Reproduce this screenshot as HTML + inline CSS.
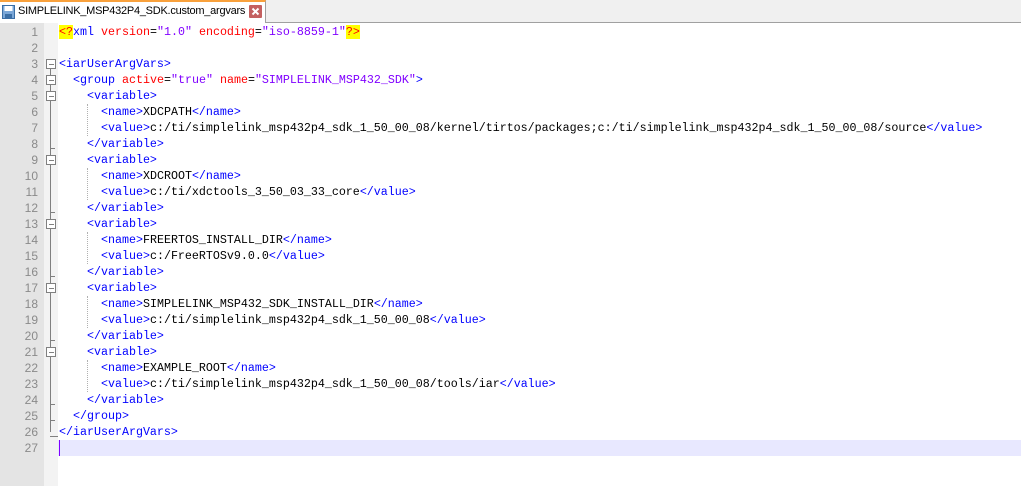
<!DOCTYPE html>
<html><head><style>
body{margin:0;width:1021px;height:486px;overflow:hidden;background:#fff;position:relative;font-family:"Liberation Mono",monospace}
#tabbar{position:absolute;left:0;top:0;width:1021px;height:22px;background:#f0f0f0;border-bottom:1px solid #a0a0a0}
#tab{position:absolute;left:0;top:0;width:266px;height:23px;background:#fff;border-top:2px solid #f9a13c;border-right:1px solid #a0a0a0;box-sizing:border-box;font-family:"Liberation Sans",sans-serif;font-size:11px;letter-spacing:-0.25px;color:#000}
#tab span{position:absolute;left:18px;top:3px}
#gut{position:absolute;left:0;top:23px;width:44px;height:463px;background:#e4e4e4}
#fold{position:absolute;left:44px;top:23px;width:14px;height:463px;background:#f3f3f3}
.ln{position:absolute;left:0;width:38px;text-align:right;font-family:"Liberation Sans",sans-serif;font-size:12px;color:#8a8a8a;height:16px;line-height:16px}
.l{position:absolute;left:59px;font-size:11.67px;line-height:16px;height:16px;white-space:pre;color:#000}
.t{color:#0000ff}.a{color:#ff0000}.v{color:#8000ff}.y{background:#ffff00;color:#ff0000}
.fb{position:absolute;left:46px;width:8px;height:8px;border:1px solid #808080;background:#fff;z-index:2}
.fb:after{content:"";position:absolute;left:2px;top:4px;width:5px;height:1px;background:#808080}
.vl{position:absolute;left:50px;width:1px;background:#808080;z-index:1}
.hl{position:absolute;left:50px;width:5px;height:1px;background:#808080;z-index:1}
.ig{position:absolute;width:0;border-left:1px dotted #b0b0b0}
</style></head><body>
<div id="tabbar"></div>
<div id="tab">
<svg style="position:absolute;left:2px;top:3px" width="13" height="14"><rect x="0.5" y="0.5" width="12" height="13" fill="#7aa7d8" stroke="#3a6ea5"/><rect x="2.5" y="1" width="8" height="5" fill="#fff"/><rect x="3" y="9" width="7" height="4" fill="#3a6ea5"/></svg>
<span>SIMPLELINK_MSP432P4_SDK.custom_argvars</span>
<svg style="position:absolute;left:249px;top:3px" width="13" height="13"><rect width="13" height="13" fill="#c46060" rx="1"/><path d="M3.5 3.5L9.5 9.5M9.5 3.5L3.5 9.5" stroke="#fff" stroke-width="2"/></svg>
</div>
<div id="gut"></div><div id="fold"></div>
<div style="position:absolute;left:58px;top:440px;width:963px;height:16px;background:#e8e8ff"></div>
<div style="position:absolute;left:59px;top:440px;width:1px;height:16px;background:#8000ff"></div>
<div id="nums"></div>
<div class="l" style="top:24px"><span class="y">&lt;?</span><span class="t">xml</span> <span class="a">version</span>=<span class="v">"1.0"</span> <span class="a">encoding</span>=<span class="v">"iso-8859-1"</span><span class="y">?&gt;</span></div>
<div class="l t" style="top:56px">&lt;iarUserArgVars&gt;</div>
<div class="l" style="top:72px">  <span class="t">&lt;group</span> <span class="a">active</span>=<span class="v">"true"</span> <span class="a">name</span>=<span class="v">"SIMPLELINK_MSP432_SDK"</span><span class="t">&gt;</span></div>
<div class="l t" style="top:88px">    &lt;variable&gt;</div>
<div class="l" style="top:104px">      <span class="t">&lt;name&gt;</span>XDCPATH<span class="t">&lt;/name&gt;</span></div>
<div class="l" style="top:120px">      <span class="t">&lt;value&gt;</span>c:/ti/simplelink_msp432p4_sdk_1_50_00_08/kernel/tirtos/packages;c:/ti/simplelink_msp432p4_sdk_1_50_00_08/source<span class="t">&lt;/value&gt;</span></div>
<div class="l t" style="top:136px">    &lt;/variable&gt;</div>
<div class="l t" style="top:152px">    &lt;variable&gt;</div>
<div class="l" style="top:168px">      <span class="t">&lt;name&gt;</span>XDCROOT<span class="t">&lt;/name&gt;</span></div>
<div class="l" style="top:184px">      <span class="t">&lt;value&gt;</span>c:/ti/xdctools_3_50_03_33_core<span class="t">&lt;/value&gt;</span></div>
<div class="l t" style="top:200px">    &lt;/variable&gt;</div>
<div class="l t" style="top:216px">    &lt;variable&gt;</div>
<div class="l" style="top:232px">      <span class="t">&lt;name&gt;</span>FREERTOS_INSTALL_DIR<span class="t">&lt;/name&gt;</span></div>
<div class="l" style="top:248px">      <span class="t">&lt;value&gt;</span>c:/FreeRTOSv9.0.0<span class="t">&lt;/value&gt;</span></div>
<div class="l t" style="top:264px">    &lt;/variable&gt;</div>
<div class="l t" style="top:280px">    &lt;variable&gt;</div>
<div class="l" style="top:296px">      <span class="t">&lt;name&gt;</span>SIMPLELINK_MSP432_SDK_INSTALL_DIR<span class="t">&lt;/name&gt;</span></div>
<div class="l" style="top:312px">      <span class="t">&lt;value&gt;</span>c:/ti/simplelink_msp432p4_sdk_1_50_00_08<span class="t">&lt;/value&gt;</span></div>
<div class="l t" style="top:328px">    &lt;/variable&gt;</div>
<div class="l t" style="top:344px">    &lt;variable&gt;</div>
<div class="l" style="top:360px">      <span class="t">&lt;name&gt;</span>EXAMPLE_ROOT<span class="t">&lt;/name&gt;</span></div>
<div class="l" style="top:376px">      <span class="t">&lt;value&gt;</span>c:/ti/simplelink_msp432p4_sdk_1_50_00_08/tools/iar<span class="t">&lt;/value&gt;</span></div>
<div class="l t" style="top:392px">    &lt;/variable&gt;</div>
<div class="l t" style="top:408px">  &lt;/group&gt;</div>
<div class="l t" style="top:424px">&lt;/iarUserArgVars&gt;</div>
<div class="vl" style="top:68px;height:364px"></div>
<script>
var n='';for(var i=1;i<=27;i++){n+='<div class="ln" style="top:'+(24+(i-1)*16)+'px">'+i+'</div>';}
var f=[3,4,5,9,13,17,21];f.forEach(function(k){n+='<div class="fb" style="top:'+(27+(k-1)*16)+'px"></div>';});
[8,12,16,20,24,25].forEach(function(k){n+='<div class="hl" style="top:'+(36+(k-1)*16)+'px"></div>';});
n+='<div class="hl" style="top:'+(36+25*16)+'px;width:8px"></div>';
[6,10,14,18,22].forEach(function(k){n+='<div class="ig" style="left:87px;top:'+(24+(k-1)*16)+'px;height:32px"></div>';});
document.getElementById('nums').innerHTML=n;
</script>
</body></html>
